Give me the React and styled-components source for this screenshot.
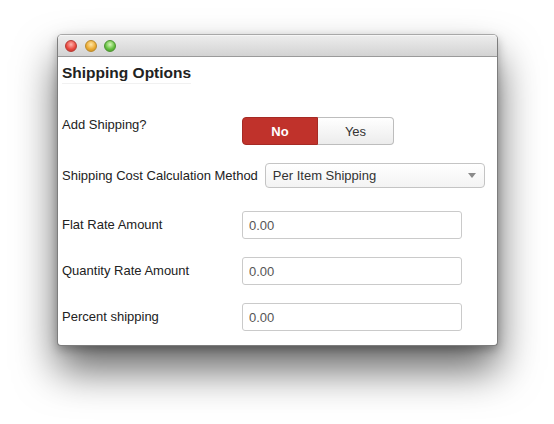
import React from "react";
import styled, { createGlobalStyle } from "styled-components";

const Global = createGlobalStyle`
  html, body { margin: 0; padding: 0; background: #ffffff; }
  body { font-family: "Liberation Sans", Arial, Helvetica, sans-serif; }
`;

const Page = styled.div`
  width: 554px;
  height: 424px;
  padding: 34px 0 0 57px;
  box-sizing: border-box;
  overflow: hidden;
`;

const Window = styled.div`
  width: 441px;
  height: 312px;
  box-sizing: border-box;
  display: flex;
  flex-direction: column;
  background: #fff;
  border: 1px solid #7d7d7d;
  border-top-color: #a8a8a8;
  border-radius: 5px 5px 4px 4px;
  overflow: hidden;
  box-shadow: 0 24px 42px rgba(0, 0, 0, 0.6), 0 4px 10px rgba(0, 0, 0, 0.25);
`;

const TitleBar = styled.div`
  height: 20px;
  flex: none;
  display: flex;
  align-items: center;
  gap: 7.5px;
  padding-left: 7px;
  background: linear-gradient(#ececec, #d3d3d3);
  border-top: 1px solid #f6f6f6;
  border-bottom: 1px solid #9a9a9a;
`;

const Light = styled.span`
  width: 12px;
  height: 12px;
  border-radius: 50%;
  box-sizing: border-box;
  border: 1px solid ${(p) => p.$edge};
  background: radial-gradient(circle at 50% 35%, ${(p) => p.$hi} 0%, ${(p) => p.$base} 60%, ${(p) => p.$edge} 100%);
`;

const Content = styled.div`
  padding: 0 4px;
  display: flex;
  flex-direction: column;
  align-items: flex-start;
`;

const Heading = styled.h3`
  margin: 6px 0 33px;
  font-size: 15.5px;
  line-height: 20px;
  font-weight: bold;
  color: #222;
  border-bottom: 1px solid #f1f1f1;
`;

const Row = styled.div`
  display: flex;
  align-items: ${(p) => (p.$top ? "flex-start" : "center")};
  height: ${(p) => p.$h || 28}px;
  margin-bottom: ${(p) => p.$mb ?? 18}px;
  gap: ${(p) => p.$gap || 0}px;
`;

const Label = styled.label`
  width: ${(p) => (p.$auto ? "auto" : "180px")};
  flex: none;
  font-size: 13px;
  line-height: 16px;
  color: #222;
  padding-top: ${(p) => p.$pt || 0}px;
`;

const ToggleGroup = styled.div`
  display: flex;
  height: 28px;
`;

const ToggleBtn = styled.button`
  width: 76px;
  height: 28px;
  box-sizing: border-box;
  font-family: inherit;
  font-size: 13px;
  padding: 0;
  cursor: pointer;
  ${(p) =>
    p.$active
      ? `
    background: #c0322b;
    color: #fff;
    font-weight: bold;
    border: 1px solid #a52a24;
    border-radius: 4px 0 0 4px;
  `
      : `
    background: linear-gradient(#ffffff, #ececec);
    color: #333;
    border: 1px solid #bdbdbd;
    border-left: none;
    border-radius: 0 4px 4px 0;
  `}
`;

const SelectBox = styled.div`
  width: 220px;
  height: 25px;
  box-sizing: border-box;
  border: 1px solid #c4c4c4;
  border-radius: 4px;
  background: linear-gradient(#ffffff, #f3f3f3);
  display: flex;
  align-items: center;
  justify-content: space-between;
  padding: 0 8px 0 7px;
  font-size: 13px;
  color: #333;
`;

const Caret = styled.span`
  width: 0;
  height: 0;
  border-left: 4px solid transparent;
  border-right: 4px solid transparent;
  border-top: 5px solid #8a8a8a;
`;

const Input = styled.input`
  width: 220px;
  height: 28px;
  box-sizing: border-box;
  border: 1px solid #cacaca;
  border-radius: 3px;
  padding: 0 6px;
  font-family: inherit;
  font-size: 13px;
  color: #555;
  background: #fff;
  outline: none;
`;

const fields = [
  { label: "Flat Rate Amount", value: "0.00" },
  { label: "Quantity Rate Amount", value: "0.00" },
  { label: "Percent shipping", value: "0.00" },
];

export default function App() {
  return (
    <>
      <Global />
      <Page>
        <Window>
          <TitleBar>
            <Light $hi="#ffb3ad" $base="#e8443a" $edge="#b53a33" />
            <Light $hi="#ffe7a6" $base="#eaa72d" $edge="#b98a2c" />
            <Light $hi="#d6f7b8" $base="#5fbd3a" $edge="#4c9231" />
          </TitleBar>
          <Content>
            <Heading>Shipping Options</Heading>
            <Row $top>
              <Label>Add Shipping?</Label>
              <ToggleGroup>
                <ToggleBtn $active>No</ToggleBtn>
                <ToggleBtn>Yes</ToggleBtn>
              </ToggleGroup>
            </Row>
            <Row $h={30} $top $gap={7}>
              <Label $auto $pt={5}>Shipping Cost Calculation Method</Label>
              <SelectBox>
                <span>Per Item Shipping</span>
                <Caret />
              </SelectBox>
            </Row>
            {fields.map((f) => (
              <Row key={f.label}>
                <Label>{f.label}</Label>
                <Input defaultValue={f.value} readOnly />
              </Row>
            ))}
          </Content>
        </Window>
      </Page>
    </>
  );
}
